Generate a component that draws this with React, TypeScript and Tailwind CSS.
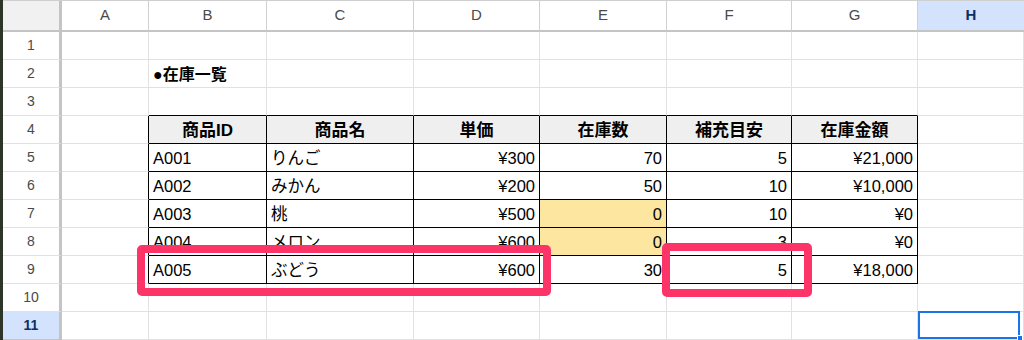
import React from "react";

type Align = "left" | "right" | "center";

type Cell = {
  text?: string;
  align?: Align;
  bold?: boolean;
  fill?: string;
  size?: string;
};

const COLS = ["A", "B", "C", "D", "E", "F", "G", "H"];
const COL_W = ["w-[87px]", "w-[118px]", "w-[147px]", "w-[126px]", "w-[127px]", "w-[125px]", "w-[126px]", "flex-1"];

// inventory table data, placed at B4:G9
const header = ["商品ID", "商品名", "単価", "在庫数", "補充目安", "在庫金額"];
const rows: Cell[][] = [
  [{ text: "A001" }, { text: "りんご" }, { text: "¥300", align: "right" }, { text: "70", align: "right" }, { text: "5", align: "right" }, { text: "¥21,000", align: "right" }],
  [{ text: "A002" }, { text: "みかん" }, { text: "¥200", align: "right" }, { text: "50", align: "right" }, { text: "10", align: "right" }, { text: "¥10,000", align: "right" }],
  [{ text: "A003" }, { text: "桃" }, { text: "¥500", align: "right" }, { text: "0", align: "right", fill: "bg-[#fde69f]" }, { text: "10", align: "right" }, { text: "¥0", align: "right" }],
  [{ text: "A004" }, { text: "メロン" }, { text: "¥600", align: "right" }, { text: "0", align: "right", fill: "bg-[#fde69f]" }, { text: "3", align: "right" }, { text: "¥0", align: "right" }],
  [{ text: "A005" }, { text: "ぶどう" }, { text: "¥600", align: "right" }, { text: "30", align: "right" }, { text: "5", align: "right" }, { text: "¥18,000", align: "right" }],
];

const font = "font-['Liberation_Sans','Noto_Sans_CJK_JP',sans-serif]";

function cellAt(r: number, c: number): Cell {
  if (r === 2 && c === 1) return { text: "●在庫一覧", bold: true, size: "text-[16px]" };
  if (r === 4 && c >= 1 && c <= 6)
    return { text: header[c - 1], align: "center", bold: true, fill: "bg-[#efefef]", size: "text-[17px]" };
  if (r >= 5 && r <= 9 && c >= 1 && c <= 6) return rows[r - 5][c - 1];
  return {};
}

function inTable(r: number, c: number) {
  return r >= 4 && r <= 9 && c >= 1 && c <= 6;
}

function GridCell({ r, c }: { r: number; c: number }) {
  const cell = cellAt(r, c);
  const rightDark = inTable(r, c) || (r >= 4 && r <= 9 && c === 0);
  const bottomDark = inTable(r, c) || (r === 3 && c >= 1 && c <= 6);
  const justify =
    cell.align === "right" ? "justify-end" : cell.align === "center" ? "justify-center" : "justify-start";
  return (
    <div
      className={`${COL_W[c]} h-full flex items-center pt-[2px] px-[4px] ${cell.size ?? "text-[16.5px]"} text-black whitespace-nowrap overflow-hidden border-r border-b ${justify} ${
        rightDark ? "border-r-black" : "border-r-[#e1e1e1]"
      } ${bottomDark ? "border-b-black" : "border-b-[#e1e1e1]"} ${cell.fill ?? "bg-white"} ${cell.bold ? "font-bold" : ""}`}
    >
      {cell.text}
    </div>
  );
}

export default function App() {
  return (
    <div className={`relative w-[1024px] h-[340px] overflow-hidden bg-white flex ${font}`}>
      {/* desktop edge peeking through on the left */}
      <div className="w-[3px] h-full bg-[#2c3526]" />

      <div className="flex-1 flex flex-col">
        {/* column letters */}
        <div className="flex h-[32px] border-t border-[#cfcfcf]">
          <div className="w-[59px] h-full bg-[#f1f1f1] border-r-[3px] border-b-2 border-[#c4c4c4]" />
          {COLS.map((col, i) => (
            <div
              key={col}
              className={`${COL_W[i]} h-full flex items-center justify-center border-b-2 border-[#c4c4c4] text-[15px] ${
                col === "H"
                  ? "bg-[#d3e3fd] text-[#0b2f66] font-bold"
                  : "bg-white text-[#4a4a4a] border-r border-r-[#d0d0d0]"
              }`}
            >
              {col}
            </div>
          ))}
        </div>

        {Array.from({ length: 11 }, (_, i) => i + 1).map((r) => (
          <div key={r} className="flex h-[28px]">
            <div
              className={`w-[59px] h-full flex items-center justify-center text-[14px] border-r-[3px] border-r-[#c4c4c4] border-b ${
                r === 11
                  ? "bg-[#d3e3fd] text-[#0b2f66] font-bold border-b-[#c4c4c4]"
                  : "bg-white text-[#4a4a4a] border-b-[#e1e1e1]"
              }`}
            >
              {r}
            </div>
            {COLS.map((_, c) => (
              <GridCell key={c} r={r} c={c} />
            ))}
          </div>
        ))}
      </div>

      {/* selected cell H11 */}
      <div className="absolute left-[918px] top-[311px] w-[102px] h-[28px] border-2 border-[#1a73e8]" />
      <div className="absolute left-[1017px] top-[335px] w-[6px] h-[6px] bg-[#1a73e8] border border-white" />

      {/* highlight marks */}
      <div className="absolute left-[137px] top-[245px] w-[414px] h-[51px] border-[8px] border-[#fd3468] rounded-[5px]" />
      <div className="absolute left-[662px] top-[243px] w-[150px] h-[54px] border-[8px] border-[#fd3468] rounded-[5px]" />
    </div>
  );
}
